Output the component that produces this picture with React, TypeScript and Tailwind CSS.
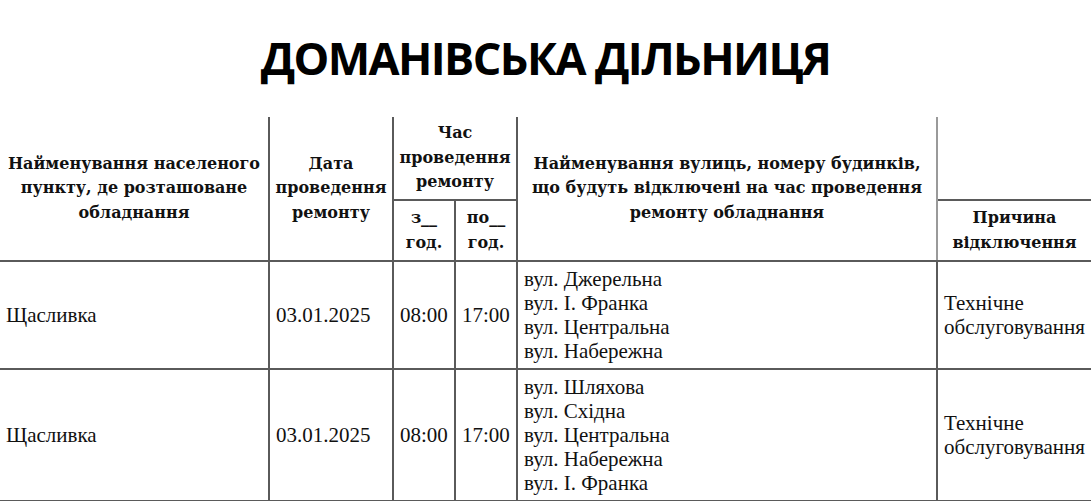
const rows = [
  {
    place: 'Щасливка',
    date: '03.01.2025',
    from: '08:00',
    to: '17:00',
    streets: ['вул. Джерельна', 'вул. І. Франка', 'вул. Центральна', 'вул. Набережна'],
    reason: ['Технічне', 'обслуговування'],
  },
  {
    place: 'Щасливка',
    date: '03.01.2025',
    from: '08:00',
    to: '17:00',
    streets: ['вул. Шляхова', 'вул. Східна', 'вул. Центральна', 'вул. Набережна', 'вул. І. Франка'],
    reason: ['Технічне', 'обслуговування'],
  },
];

const head = "font-['DejaVu_Serif',serif] font-bold text-[16px] leading-[24.5px] text-[#111] text-center align-middle";
const cell = 'px-[6px] align-middle text-left';

export default function App() {
  return (
    <main className="w-[1091px] h-[501px] overflow-hidden bg-white text-[#111]">
      <div className="h-[117px] flex items-center justify-center pb-[2px]">
        <h1 className="font-['Open_Sans',sans-serif] font-bold text-[45px] leading-none tracking-[-1.6px] text-black">
          ДОМАНІВСЬКА ДІЛЬНИЦЯ
        </h1>
      </div>

      <table className="w-[1091px] table-fixed border-collapse font-['Liberation_Serif',serif] text-[21px] leading-[24px]">
        <colgroup>
          <col className="w-[269px]" />
          <col className="w-[124px]" />
          <col className="w-[62px]" />
          <col className="w-[62px]" />
          <col className="w-[420px]" />
          <col className="w-[154px]" />
        </colgroup>
        <thead>
          <tr className="h-[83px]">
            <th rowSpan={2} className={`${head} border-r-2 border-b-2 border-[#5a5a5a]`}>
              Найменування населеного
              <br />
              пункту, де розташоване
              <br />
              обладнання
            </th>
            <th rowSpan={2} className={`${head} border-r-2 border-b-2 border-[#5a5a5a]`}>
              Дата
              <br />
              проведення
              <br />
              ремонту
            </th>
            <th colSpan={2} className={`${head} border-r-2 border-b-2 border-[#5a5a5a]`}>
              Час
              <br />
              проведення
              <br />
              ремонту
            </th>
            <th rowSpan={2} className={`${head} border-r-2 border-b-2 border-[#5a5a5a] border-r-[#9a9a9a]`}>
              Найменування вулиць, номеру будинків,
              <br />
              що будуть відключені на час проведення
              <br />
              ремонту обладнання
            </th>
            <th className={head}></th>
          </tr>
          <tr className="h-[61px]">
            <th className={`${head} border-r-2 border-b-2 border-[#5a5a5a]`}>
              з__
              <br />
              год.
            </th>
            <th className={`${head} border-r-2 border-b-2 border-[#5a5a5a]`}>
              по__
              <br />
              год.
            </th>
            <th className={`${head} border-t-2 border-b-2 border-l-2 border-[#5a5a5a]`}>
              Причина
              <br />
              відключення
            </th>
          </tr>
        </thead>
        <tbody>
          {rows.map((r, i) => (
            <tr key={i}>
              <td className={`${cell} border-r-2 border-b-2 border-[#5a5a5a]`}>{r.place}</td>
              <td className={`${cell} border-r-2 border-b-2 border-[#5a5a5a]`}>{r.date}</td>
              <td className={`${cell} border-r-2 border-b-2 border-[#5a5a5a]`}>{r.from}</td>
              <td className={`${cell} border-r-2 border-b-2 border-[#5a5a5a]`}>{r.to}</td>
              <td className={`${cell} py-[5px] border-r-2 border-b-2 border-[#5a5a5a]`}>
                {r.streets.map((s) => (
                  <div key={s}>{s}</div>
                ))}
              </td>
              <td className={`${cell} border-b-2 border-[#5a5a5a]`}>
                {r.reason.map((s) => (
                  <div key={s}>{s}</div>
                ))}
              </td>
            </tr>
          ))}
        </tbody>
      </table>
    </main>
  );
}
